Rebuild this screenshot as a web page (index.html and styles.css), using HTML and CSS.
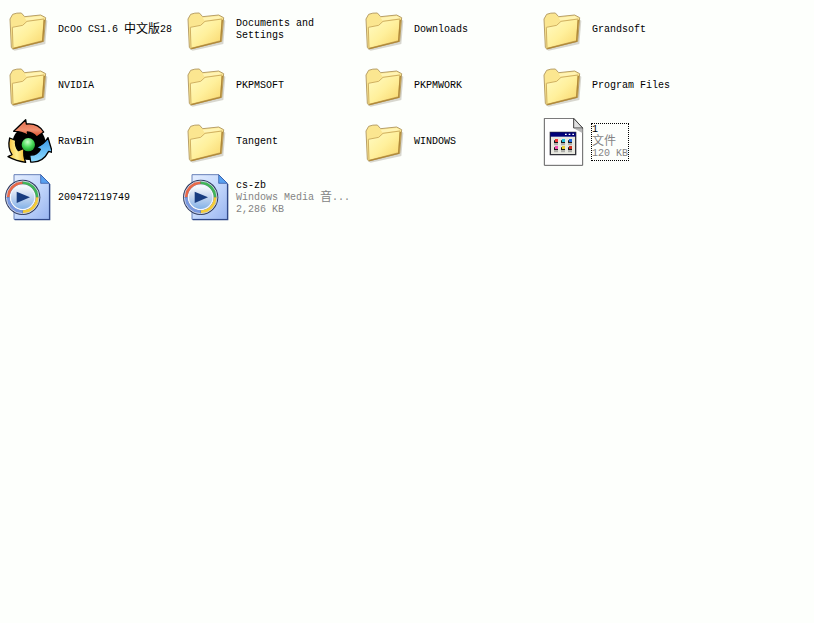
FILE: index.html
```
<!DOCTYPE html>
<html lang="zh-CN">
<head>
	<meta charset="utf-8">
	<title>本地磁盘 (C:)</title>
	<link rel="stylesheet" href="styles.css">
</head>
<body>
	<svg class="sprite" aria-hidden="true">
		<defs>
			<linearGradient id="folderFront" x1="0" y1="0" x2="1" y2="1">
				<stop offset="0" stop-color="#fffbc4"/>
				<stop offset=".5" stop-color="#fff09c"/>
				<stop offset="1" stop-color="#f8d468"/>
			</linearGradient>
			<linearGradient id="red" x1="0" y1="0" x2="0" y2="1">
				<stop offset="0" stop-color="#e06848"/>
				<stop offset=".6" stop-color="#f09070"/>
				<stop offset="1" stop-color="#d84420"/>
			</linearGradient>
			<linearGradient id="yellow" x1="0" y1="0" x2="1" y2="0">
				<stop offset="0" stop-color="#f8c038"/>
				<stop offset=".5" stop-color="#fff090"/>
				<stop offset="1" stop-color="#f8b828"/>
			</linearGradient>
			<linearGradient id="blue" x1="0" y1="0" x2="0" y2="1">
				<stop offset="0" stop-color="#3898e8"/>
				<stop offset="1" stop-color="#90dcff"/>
			</linearGradient>
			<radialGradient id="green" cx=".45" cy=".3" r=".8">
				<stop offset="0" stop-color="#c8ffc8"/>
				<stop offset=".5" stop-color="#48d858"/>
				<stop offset="1" stop-color="#108820"/>
			</radialGradient>
			<linearGradient id="page" x1="0" y1="0" x2="1" y2="1">
				<stop offset="0" stop-color="#e4eeff"/>
				<stop offset=".5" stop-color="#c4d8fc"/>
				<stop offset="1" stop-color="#98b4f0"/>
			</linearGradient>
			<linearGradient id="disc" x1="0" y1="0" x2="0" y2="1">
				<stop offset="0" stop-color="#ffffff"/>
				<stop offset=".45" stop-color="#c8d8f0"/>
				<stop offset="1" stop-color="#80b0e8"/>
			</linearGradient>
		</defs>

		<symbol id="folder" viewBox="12 6 144 144">
			<path d="M36 136L44 140L136 120L142 50L136 46Z" fill="#c0bcb0" opacity=".6"/>
			<path d="M30 45L38 31Q50 26 64 27L74 38L122 33L137 41L131 112L38 135L34 130Z" fill="#fbe690" stroke="#b8a068" stroke-width="3" stroke-linejoin="round"/>
			<path d="M74 41L122 36L133 43L80 50Z" fill="#fff4b4"/>
			<path d="M37 70L68 64L81 52L132 45L128 110L39 133Z" fill="url(#folderFront)" stroke="#d0b060" stroke-width="3" stroke-linejoin="round"/>
			<path d="M40 134L128 112L133 48" fill="none" stroke="#b08838" stroke-width="4"/>
		</symbol>

		<symbol id="recycle" viewBox="0 6 144 144">
			<circle cx="75" cy="82" r="50" fill="#000"/>
			<path d="M29 46L65 11L67 24Q102 20 119 48L98 63Q86 49 70 48L72 58Q50 45 29 46Z" fill="url(#red)" stroke="#000" stroke-width="4" stroke-linejoin="round"/>
			<path d="M17 66L35 73Q32 90 43 104L60 97Q57 120 65 139Q38 136 12 122L24 116Q10 96 17 66Z" fill="url(#yellow)" stroke="#000" stroke-width="4" stroke-linejoin="round"/>
			<path d="M132 65L145 109L134 106Q116 141 80 138L77 117Q99 119 109 100L97 94Q121 84 132 65Z" fill="url(#blue)" stroke="#000" stroke-width="4" stroke-linejoin="round"/>
			<circle cx="73" cy="86" r="20" fill="url(#green)"/>
		</symbol>

		<symbol id="media" viewBox="12 18 144 144">
			<path d="M42 20H122L148 46V154H42Z" fill="url(#page)" stroke="#6880b8" stroke-width="3"/>
			<path d="M44 155H149V48" fill="none" stroke="#304888" stroke-width="4"/>
			<path d="M122 20V46H148Z" fill="#58a0f0" stroke="#284c98" stroke-width="2"/>
			<circle cx="68" cy="88" r="53" fill="#303c60"/>
			<g fill="none" stroke-width="10">
				<path d="M24 88A44 44 0 0 1 68 44" stroke="#e86848"/>
				<path d="M68 44A44 44 0 0 1 112 88" stroke="#40b458"/>
				<path d="M112 88A44 44 0 0 1 68 132" stroke="#f4cc38"/>
				<path d="M68 132A44 44 0 0 1 24 88" stroke="#7898e0"/>
			</g>
			<circle cx="68" cy="88" r="49" fill="none" stroke="#c8d0e4" stroke-width="3"/>
			<circle cx="68" cy="88" r="37" fill="url(#disc)" stroke="#f4f8ff" stroke-width="4"/>
			<path d="M50 71L90 88L50 105Z" fill="#183c80"/>
		</symbol>

		<symbol id="program" viewBox="9 18 144 144">
			<path d="M28 19H116L143 48V160H28Z" fill="#fff" stroke="#606060" stroke-width="3"/>
			<path d="M116 19V48H143Z" fill="#e0e0e0" stroke="#404040" stroke-width="3"/>
			<path d="M120 51H142V63Z" fill="#b8b8b8"/>
			<path d="M46 61H122V128H46Z" fill="#e8e8e0" stroke="#303038" stroke-width="4"/>
			<path d="M46 61H122V74H46Z" fill="#000078"/>
			<path d="M90 65h5v4h-5zM101 65h5v4h-5zM112 65h5v4h-5z" fill="#fff"/>
			<path d="M57 85h12v9h-12zM78 85h12v9h-12zM99 85h12v9h-12zM57 106h12v9h-12zM78 106h12v9h-12zM99 106h12v9h-12z" fill="#181818"/>
			<path d="M60 81h9v9h-9z" fill="#f03838"/>
			<path d="M81 81h9v9h-9z" fill="#20c0d8"/>
			<path d="M102 81h9v9h-9z" fill="#2068e0"/>
			<path d="M60 102h9v9h-9z" fill="#f050b0"/>
			<path d="M81 102h9v9h-9z" fill="#e8d030"/>
			<path d="M102 102h9v9h-9z" fill="#d03020"/>
			<path d="M57 98h12M78 98h12M99 98h12M57 119h12M78 119h12M99 119h12" stroke="#808080" stroke-width="2"/>
		</symbol>
	</svg>

	<ul class="files">
		<li><a class="file" href="#"><svg class="icon"><use href="#folder"/></svg><span class="label">DcOo CS1.6 <span class="cjk">中文版</span>28</span></a></li>
		<li><a class="file" href="#"><svg class="icon"><use href="#folder"/></svg><span class="label">Documents and Settings</span></a></li>
		<li><a class="file" href="#"><svg class="icon"><use href="#folder"/></svg><span class="label">Downloads</span></a></li>
		<li><a class="file" href="#"><svg class="icon"><use href="#folder"/></svg><span class="label">Grandsoft</span></a></li>
		<li><a class="file" href="#"><svg class="icon"><use href="#folder"/></svg><span class="label">NVIDIA</span></a></li>
		<li><a class="file" href="#"><svg class="icon"><use href="#folder"/></svg><span class="label">PKPMSOFT</span></a></li>
		<li><a class="file" href="#"><svg class="icon"><use href="#folder"/></svg><span class="label">PKPMWORK</span></a></li>
		<li><a class="file" href="#"><svg class="icon"><use href="#folder"/></svg><span class="label">Program Files</span></a></li>
		<li><a class="file" href="#"><svg class="icon"><use href="#recycle"/></svg><span class="label">RavBin</span></a></li>
		<li><a class="file" href="#"><svg class="icon"><use href="#folder"/></svg><span class="label">Tangent</span></a></li>
		<li><a class="file" href="#"><svg class="icon"><use href="#folder"/></svg><span class="label">WINDOWS</span></a></li>
		<li>
			<a class="file" href="#">
				<svg class="icon"><use href="#program"/></svg>
				<span class="label selected">1<span class="info"><span class="cjk">文件</span></span><span class="info">120 KB</span></span>
			</a>
		</li>
		<li><a class="file" href="#"><svg class="icon"><use href="#media"/></svg><span class="label">200472119749</span></a></li>
		<li>
			<a class="file" href="#">
				<svg class="icon"><use href="#media"/></svg>
				<span class="label">cs-zb<span class="info">Windows Media <span class="cjk">音</span>...</span><span class="info">2,286 KB</span></span>
			</a>
		</li>
	</ul>
</body>
</html>
```
FILE: styles.css
```
* {
	margin: 0;
	padding: 0;
	box-sizing: border-box;
}
body {
	background: #fdfffc;
	color: #000;
	font: 10px/12px "Liberation Mono", "Noto Sans CJK SC", monospace;
}
.sprite {
	position: absolute;
	width: 0;
	height: 0;
}

/* tiles */
.files {
	display: grid;
	grid-template-columns: repeat(auto-fill, 178px);
	grid-auto-rows: 56px;
	padding: 2px 4px;
	list-style: none;
}
.file {
	display: flex;
	align-items: center;
	gap: 6px;
	height: 100%;
	color: inherit;
	text-decoration: none;
}
.icon {
	flex: none;
	width: 48px;
	height: 48px;
}
.label {
	max-width: 118px;
}
.cjk {
	font-size: 12px;
	line-height: 10px;
	vertical-align: -1px;
}
.info {
	display: block;
	color: #848484;
	white-space: nowrap;
}
.selected {
	outline: 1px dotted #000;
}
```
